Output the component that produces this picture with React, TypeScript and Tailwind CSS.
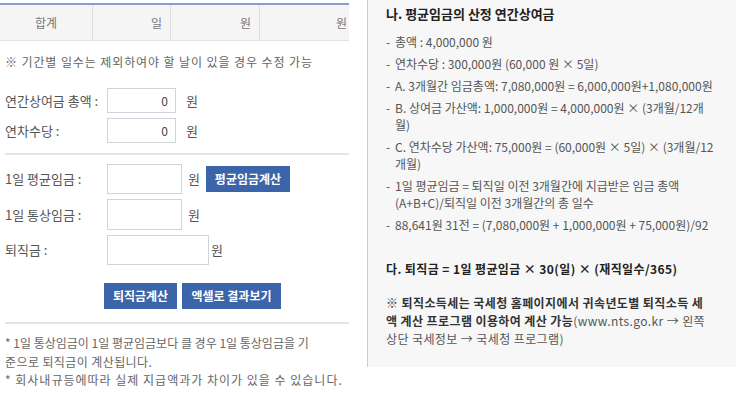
const font = { fontFamily: '"Noto Sans CJK KR", "Noto Sans", sans-serif' };

const FormRow = ({
  label,
  inputW,
  inputH,
  value,
  gap,
  children,
}: {
  label: string;
  inputW: string;
  inputH: string;
  value?: string;
  gap: string;
  children?: React.ReactNode;
}) => (
  <div className="flex items-center">
    <div className="w-[102px] text-[13px] text-[#555]">{label}</div>
    <div
      className={`${inputW} ${inputH} border border-[#cfd3dc] bg-white flex items-center justify-end pr-[7px] text-[12px] text-[#444]`}
    >
      {value}
    </div>
    <span className={`${gap} text-[13px] text-[#555]`}>원</span>
    {children}
  </div>
);

const Btn = ({ children, w }: { children: React.ReactNode; w: string }) => (
  <div
    className={`${w} h-[26px] bg-[#3c64a9] text-white text-[12px] font-bold flex items-center justify-center`}
  >
    {children}
  </div>
);

const Item = ({ lines }: { lines: string[] }) => (
  <div className="flex leading-[17px]">
    <span className="w-[9px] shrink-0">-</span>
    <div>
      {lines.map((l, i) => (
        <div key={i} className="whitespace-nowrap">
          {l}
        </div>
      ))}
    </div>
  </div>
);

export default function App() {
  return (
    <div className="w-[736px] h-[393px] bg-white flex overflow-hidden" style={font}>
      {/* Left calculator */}
      <div className="w-[349px] pt-[3px] shrink-0">
        <div className="border-t-2 border-[#8d9cce] border-b border-b-[#e2e2e2] bg-[#f5f5f5] h-[38px] flex text-[12px] text-[#777]">
          <div className="w-[93px] flex items-center justify-center border-r border-[#dedede]">합계</div>
          <div className="w-[78px] flex items-center justify-end pr-[8px] border-r border-[#dedede]">일</div>
          <div className="w-[89px] flex items-center justify-end pr-[8px] border-r border-[#dedede]">원</div>
          <div className="flex-1 flex items-center justify-end pr-[2px]">원</div>
        </div>

        <div className="pl-[5px]">
          <p className="mt-[12px] text-[12px] leading-[18px] text-[#666] tracking-[0.9px] whitespace-nowrap">
            ※ 기간별 일수는 제외하여야 할 날이 있을 경우 수정 가능
          </p>

          <div className="mt-[17px] flex flex-col gap-[5px]">
            <FormRow label="연간상여금 총액 :" inputW="w-[69px]" inputH="h-[25px]" value="0" gap="ml-[10px]" />
            <FormRow label="연차수당 :" inputW="w-[69px]" inputH="h-[25px]" value="0" gap="ml-[10px]" />
          </div>

          <div className="mt-[10px] h-[2px] bg-[#e4e4e4]" />

          <div className="mt-[9px] flex flex-col gap-[5px]">
            <FormRow label="1일 평균임금 :" inputW="w-[75px]" inputH="h-[30px]" gap="ml-[6px]">
              <div className="ml-[6px]">
                <Btn w="w-[84px]">평균임금계산</Btn>
              </div>
            </FormRow>
            <FormRow label="1일 통상임금 :" inputW="w-[75px]" inputH="h-[31px]" gap="ml-[6px]" />
            <FormRow label="퇴직금 :" inputW="w-[102px]" inputH="h-[30px]" gap="ml-[2px]" />
          </div>

          <div className="mt-[18px] flex gap-[5px] pl-[99px]">
            <Btn w="w-[73px]">퇴직금계산</Btn>
            <Btn w="w-[99px]">엑셀로 결과보기</Btn>
          </div>

          <div className="mt-[13px] h-[2px] bg-[#e4e4e4]" />

          <div className="mt-[10px] text-[12px] leading-[18.5px] text-[#666] whitespace-nowrap">
            <div>* 1일 통상임금이 1일 평균임금보다 클 경우 1일 통상임금을 기</div>
            <div className="tracking-[0.4px]">준으로 퇴직금이 계산됩니다.</div>
            <div className="tracking-[1px]">* 회사내규등에따라 실제 지급액과가 차이가 있을 수 있습니다.</div>
          </div>
        </div>
      </div>

      {/* Right explanation */}
      <div className="ml-[18px] flex-1 self-start h-[367px] bg-[#f7f7f7] border-l border-[#cccccc] pl-[18px] pt-[4px] text-[#444]">
        <div className="text-[13px] font-bold text-[#222] leading-[20px]">나. 평균임금의 산정 연간상여금</div>
        <div className="mt-[9px] text-[12px] flex flex-col gap-[5px] text-[#555]">
          <Item lines={["총액 : 4,000,000 원"]} />
          <Item lines={["연차수당 : 300,000원 (60,000 원 × 5일)"]} />
          <Item lines={["A. 3개월간 임금총액: 7,080,000원 = 6,000,000원+1,080,000원"]} />
          <Item lines={["B. 상여금 가산액: 1,000,000원 = 4,000,000원 × (3개월/12개", "월)"]} />
          <Item lines={["C. 연차수당 가산액: 75,000원 = (60,000원 × 5일) × (3개월/12", "개월)"]} />
          <Item lines={["1일 평균임금 = 퇴직일 이전 3개월간에 지급받은 임금 총액", "(A+B+C)/퇴직일 이전 3개월간의 총 일수"]} />
          <Item lines={["88,641원 31전 = (7,080,000원 + 1,000,000원 + 75,000원)/92"]} />
        </div>

        <div className="mt-[27px] text-[12px] font-bold text-[#222] leading-[18px] tracking-[0.4px]">
          다. 퇴직금 = 1일 평균임금 × 30(일) × (재직일수/365)
        </div>

        <div className="mt-[16px] text-[12px] leading-[18px] text-[#333] tracking-[0.4px] whitespace-nowrap">
          <div className="font-bold">※ 퇴직소득세는 국세청 홈페이지에서 귀속년도별 퇴직소득 세</div>
          <div>
            <span className="font-bold">액 계산 프로그램 이용하여 계산 가능</span>
            <span className="text-[#555]">(www.nts.go.kr → 왼쪽</span>
          </div>
          <div className="text-[#555]">상단 국세정보 → 국세청 프로그램)</div>
        </div>
      </div>
    </div>
  );
}
